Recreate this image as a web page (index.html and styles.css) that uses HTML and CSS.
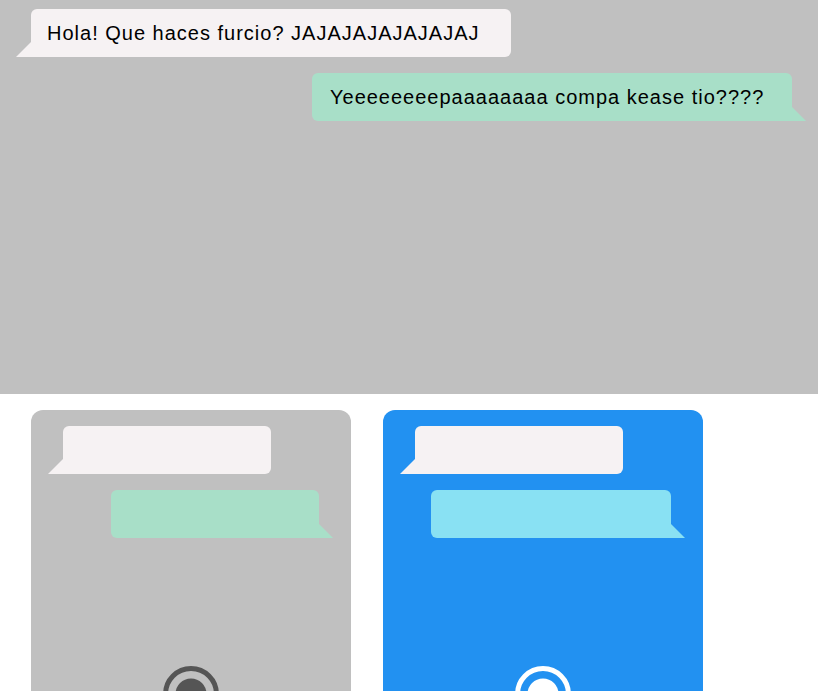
FILE: index.html
```html
<!DOCTYPE html>
<html lang="es">
<head>
<meta charset="utf-8">
<title>Chat</title>
<link rel="stylesheet" href="styles.css">
</head>
<body>
<section class="chat">
  <div class="bubble bubble--in">Hola! Que haces furcio? JAJAJAJAJAJAJAJ</div>
  <div class="bubble bubble--out">Yeeeeeeeepaaaaaaaa compa kease tio????</div>
</section>
<section class="themes">
  <div class="theme theme--gray">
    <div class="mini mini--in"></div>
    <div class="mini mini--out mini--green"></div>
    <svg class="radio" width="56" height="56" viewBox="0 0 56 56">
      <circle cx="28" cy="28" r="25.5" fill="none" stroke="#555555" stroke-width="5"/>
      <circle cx="28" cy="28" r="15.5" fill="#555555"/>
    </svg>
  </div>
  <div class="theme theme--blue">
    <div class="mini mini--in"></div>
    <div class="mini mini--out mini--cyan"></div>
    <svg class="radio" width="56" height="56" viewBox="0 0 56 56">
      <circle cx="28" cy="28" r="25.5" fill="none" stroke="#ffffff" stroke-width="5"/>
      <circle cx="28" cy="28" r="15.5" fill="#ffffff"/>
    </svg>
  </div>
</section>
</body>
</html>
```
FILE: styles.css
```css
html, body {
  margin: 0;
  padding: 0;
  background: #ffffff;
  font-family: "Liberation Sans", Arial, Helvetica, sans-serif;
  overflow: hidden;
}

.chat {
  box-sizing: border-box;
  height: 394px;
  background: #c0c0c0;
  padding: 9px 26px 0 31px;
  display: flex;
  flex-direction: column;
  gap: 16px;
}

.bubble {
  position: relative;
  box-sizing: border-box;
  width: 480px;
  height: 48px;
  line-height: 48px;
  font-size: 20px;
  letter-spacing: 1px;
  color: #000000;
  padding: 0 16px;
  white-space: nowrap;
}

.bubble::before,
.mini::before {
  content: "";
  position: absolute;
  bottom: 0;
  width: 0;
  height: 0;
  border-bottom: 15px solid transparent;
}

.bubble--in {
  align-self: flex-start;
  background: #f6f2f3;
  border-radius: 6px 6px 6px 0;
}

.bubble--in::before,
.mini--in::before {
  left: -15px;
  border-left: 15px solid transparent;
  border-bottom-color: #f6f2f3;
}

.bubble--out {
  align-self: flex-end;
  background: #a8dfc8;
  border-radius: 6px 6px 0 6px;
  padding-left: 18px;
}

.bubble--out::before {
  right: -14px;
  border-right: 14px solid transparent;
  border-bottom-width: 14px;
  border-bottom-color: #a8dfc8;
}

.themes {
  display: flex;
  gap: 32px;
  padding: 16px 0 0 31px;
}

.theme {
  box-sizing: border-box;
  width: 320px;
  height: 320px;
  border-radius: 12px;
  padding: 16px 32px 0 32px;
  display: flex;
  flex-direction: column;
  gap: 16px;
}

.theme--gray { background: #c0c0c0; }
.theme--blue { background: #2291f1; }

.mini {
  position: relative;
  height: 48px;
}

.mini--in {
  width: 208px;
  align-self: flex-start;
  background: #f6f2f3;
  border-radius: 6px 6px 6px 0;
}

.mini--out {
  align-self: flex-end;
  border-radius: 6px 6px 0 6px;
}

.mini--out::before {
  right: -14px;
  border-right: 14px solid transparent;
  border-bottom-width: 14px;
}

.mini--green { width: 208px; background: #a8dfc8; }
.mini--green::before { border-bottom-color: #a8dfc8; }

.mini--cyan { width: 240px; background: #89e1f3; }
.mini--cyan::before { border-bottom-color: #89e1f3; }

.radio {
  align-self: center;
  margin-top: 112px;
  display: block;
}
```
